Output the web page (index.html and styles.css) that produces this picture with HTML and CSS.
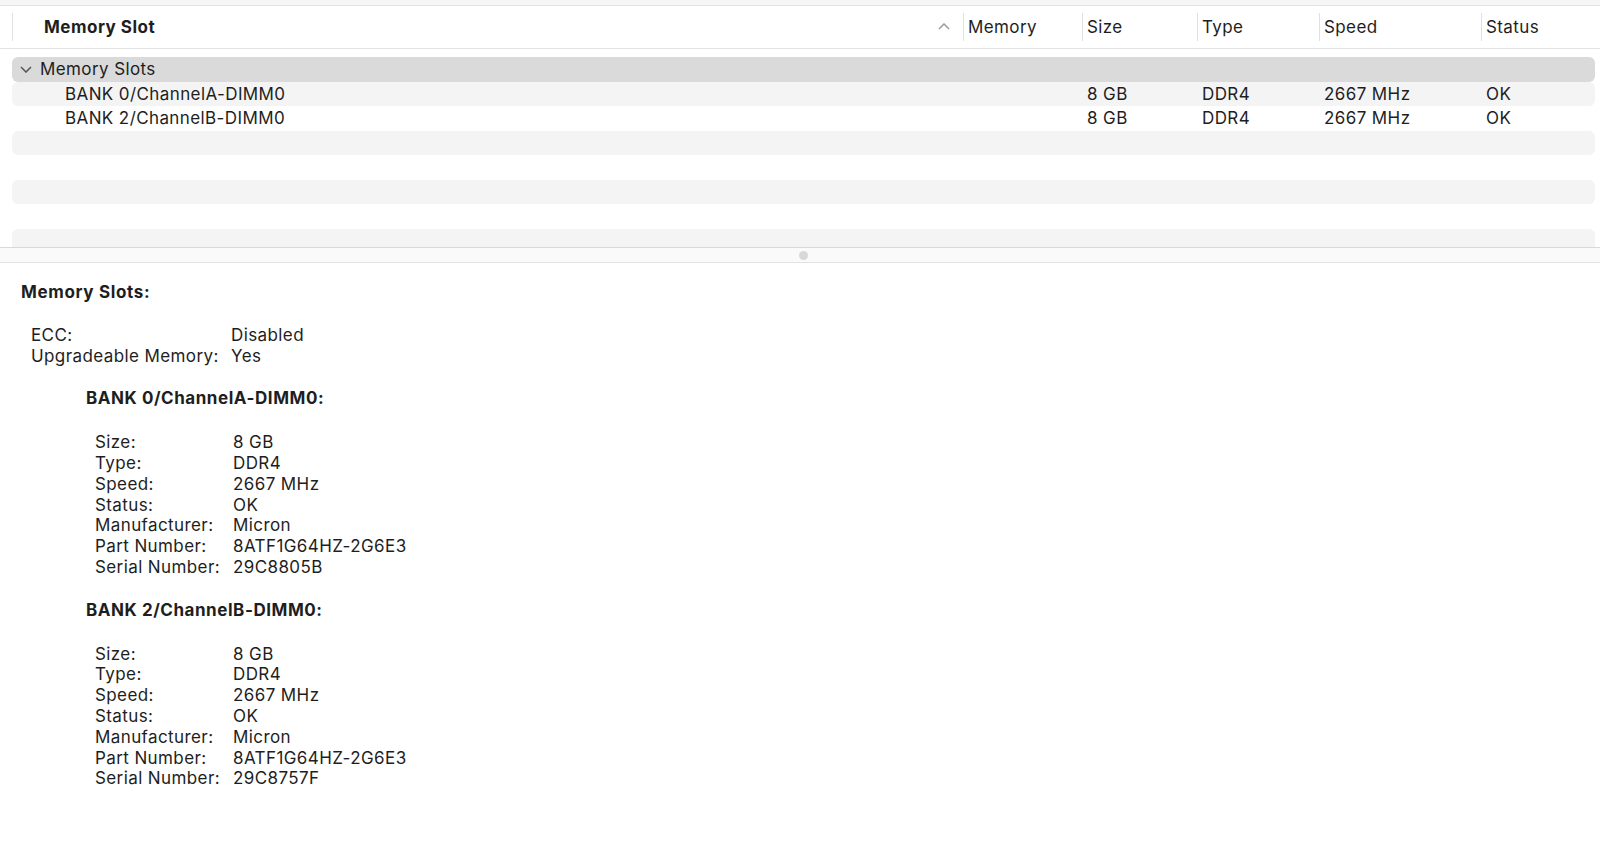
FILE: index.html
```html
<!DOCTYPE html>
<html lang="en">
<head>
    <meta charset="UTF-8">
    <title>System Information - Memory</title>
    <link rel="stylesheet" href="styles.css">
</head>
<body>
    <div class="table-pane">
        <div class="top-strip"></div>
        <div class="table-header">
            <div class="hcell first">
                <span>Memory Slot</span>
                <svg class="sort" width="12" height="7" viewBox="0 0 12 7"><polyline points="1,6 6,1 11,6" fill="none" stroke="#9c9c9c" stroke-width="1.5"/></svg>
            </div>
            <div class="hcell">Memory</div>
            <div class="hcell">Size</div>
            <div class="hcell">Type</div>
            <div class="hcell">Speed</div>
            <div class="hcell">Status</div>
        </div>

        <div class="rows">
            <div class="row group">
                <div class="cell first">
                    <svg class="disclosure" width="12" height="7" viewBox="0 0 12 7"><polyline points="1,1 6,6 11,1" fill="none" stroke="#5a5a5a" stroke-width="1.6"/></svg>
                    <span>Memory Slots</span>
                </div>
                <div class="cell"></div>
                <div class="cell"></div>
                <div class="cell"></div>
                <div class="cell"></div>
                <div class="cell"></div>
            </div>
            <div class="row stripe">
                <div class="cell first child">BANK 0/ChannelA-DIMM0</div>
                <div class="cell"></div>
                <div class="cell">8 GB</div>
                <div class="cell">DDR4</div>
                <div class="cell">2667 MHz</div>
                <div class="cell">OK</div>
            </div>
            <div class="row">
                <div class="cell first child">BANK 2/ChannelB-DIMM0</div>
                <div class="cell"></div>
                <div class="cell">8 GB</div>
                <div class="cell">DDR4</div>
                <div class="cell">2667 MHz</div>
                <div class="cell">OK</div>
            </div>
            <div class="row stripe"></div>
            <div class="row"></div>
            <div class="row stripe"></div>
            <div class="row"></div>
            <div class="row stripe"></div>
        </div>
    </div>

    <div class="splitter"><span class="grip"></span></div>

    <main class="details">
        <h3 class="title">Memory Slots:</h3>

        <div class="props top-props">
            <span>ECC:</span><span>Disabled</span>
            <span>Upgradeable Memory:</span><span>Yes</span>
        </div>

        <section class="bank">
            <h4>BANK 0/ChannelA-DIMM0:</h4>
            <div class="props">
                <span>Size:</span><span>8 GB</span>
                <span>Type:</span><span>DDR4</span>
                <span>Speed:</span><span>2667 MHz</span>
                <span>Status:</span><span>OK</span>
                <span>Manufacturer:</span><span>Micron</span>
                <span>Part Number:</span><span>8ATF1G64HZ-2G6E3</span>
                <span>Serial Number:</span><span>29C8805B</span>
            </div>
        </section>

        <section class="bank">
            <h4>BANK 2/ChannelB-DIMM0:</h4>
            <div class="props">
                <span>Size:</span><span>8 GB</span>
                <span>Type:</span><span>DDR4</span>
                <span>Speed:</span><span>2667 MHz</span>
                <span>Status:</span><span>OK</span>
                <span>Manufacturer:</span><span>Micron</span>
                <span>Part Number:</span><span>8ATF1G64HZ-2G6E3</span>
                <span>Serial Number:</span><span>29C8757F</span>
            </div>
        </section>
    </main>
</body>
</html>
```

FILE: styles.css
```css
body {
    margin: 0;
    font-family: Inter, "Noto Sans", sans-serif;
    font-size: 17px;
    letter-spacing: 0.4px;
    color: #1e1e1e;
    background-color: #ffffff;
}

/* Top table */
.table-pane {
    height: 247px;
    overflow: hidden;
}
.top-strip {
    height: 5px;
    background-color: #f6f6f6;
    border-bottom: 1px solid #e3e3e3;
}
.table-header {
    height: 42px;
    padding-left: 12px;
    display: grid;
    grid-template-columns: 951px 119px 115px 122px 162px 1fr;
    align-items: center;
    border-bottom: 1px solid #e3e3e3;
}
.hcell {
    height: 28px;
    display: flex;
    align-items: center;
    padding-left: 4px;
    border-left: 1px solid #e0e0e0;
}
.hcell.first {
    padding-left: 31px;
    padding-right: 13px;
    font-weight: 700;
    letter-spacing: 0.5px;
    justify-content: space-between;
}
.sort {
    margin-top: -1px;
}

.rows {
    margin-top: 8px;
    padding: 0 5px 0 12px;
}
.row {
    height: 24.5px;
    display: grid;
    grid-template-columns: 951px 119px 115px 122px 162px 1fr;
    align-items: center;
    border-radius: 6px;
}
.row.group {
    background-color: #dadada;
}
.row.stripe {
    background-color: #f4f4f4;
}
.cell {
    padding-left: 5px;
    white-space: nowrap;
}
.cell.first {
    display: flex;
    align-items: center;
    padding-left: 8px;
}
.disclosure {
    margin-right: 8px;
}
.cell.child {
    padding-left: 53px;
}

/* Split handle */
.splitter {
    height: 14px;
    background-color: #fafafa;
    border-top: 1px solid #d9d9d9;
    border-bottom: 1px solid #e2e2e2;
    display: flex;
    justify-content: center;
    align-items: center;
}
.grip {
    width: 9px;
    height: 9px;
    border-radius: 50%;
    background-color: #d8d8d8;
    margin-left: 6px;
}

/* Detail text */
.details {
    padding: 19px 0 0 21px;
    line-height: 20.8px;
}
.title {
    margin: 0 0 22px 0;
    font-size: 17px;
    font-weight: 700;
    letter-spacing: 0.65px;
}
.props {
    display: grid;
    grid-template-columns: 138px auto;
    justify-content: start;
}
.top-props {
    grid-template-columns: 200px auto;
    padding-left: 10px;
}
.bank {
    padding-left: 65px;
    margin-top: 22px;
}
.bank h4 {
    margin: 0 0 23px 0;
    font-size: 17px;
    font-weight: 700;
    letter-spacing: 0.55px;
}
.bank .props {
    padding-left: 9px;
}
```
